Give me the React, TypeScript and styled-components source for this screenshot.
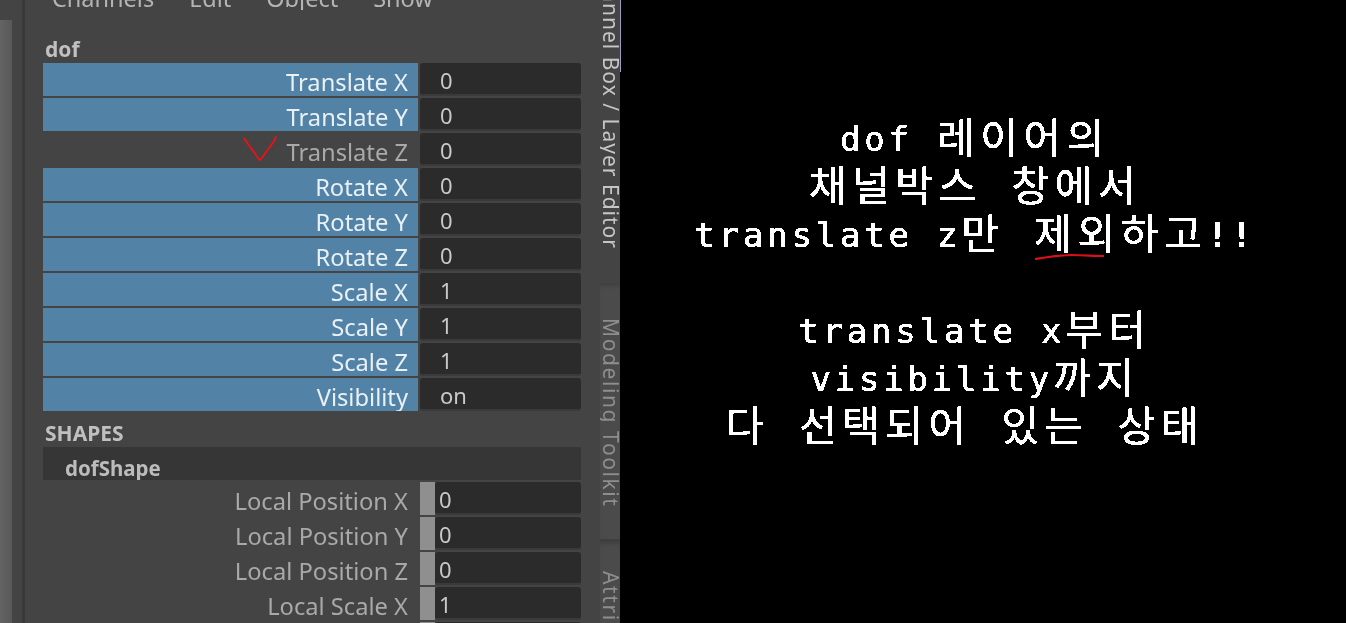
import React from "react";
import styled, { createGlobalStyle } from "styled-components";

const GlobalStyle = createGlobalStyle`
  html, body {
    margin: 0;
    padding: 0;
    height: 100%;
    background: #000;
    overflow: hidden;
  }
  #root {
    height: 100%;
  }
`;

// ---------------------
// Page
// ---------------------
const Page = styled.div`
  display: flex;
  width: 1346px;
  height: 623px;
  overflow: hidden;
`;

const MayaWindow = styled.div`
  position: relative;
  display: flex;
  flex: 0 0 620px;
  height: 623px;
  overflow: hidden;
  background: #444444;
  font-family: "Noto Sans", "Open Sans", sans-serif;
`;

/* Faixa cinza da esquerda */
const LeftGutter = styled.div`
  flex: 0 0 12px;
  margin-top: 20px;
  background: linear-gradient(90deg, #646464, #585858);
`;

const LeftDivider = styled.div`
  flex: 0 0 3px;
  margin-left: 10px;
  background: #393939;
`;

/* Channel box */
const ChannelBox = styled.div`
  flex: 0 0 556px;
  padding-left: 18px;
  box-sizing: border-box;
  filter: blur(0.5px);
`;

const MenuBar = styled.div`
  display: flex;
  align-items: flex-end;
  height: 10px;
  overflow: hidden;
  padding-left: 9px;
  gap: 35px;
`;

const MenuItem = styled.span`
  font-size: 23.5px;
  line-height: 30px;
  margin-bottom: -3px;
  color: #b4b4b4;
  flex: none;
`;

const NodeName = styled.div`
  height: 53px;
  box-sizing: border-box;
  padding: 26px 0 0 2px;
  font-size: 21px;
  line-height: 26px;
  font-weight: 700;
  color: #c0c0c0;
`;

const Row = styled.div`
  display: flex;
  height: 33px;
  margin-bottom: 2px;
`;

const Label = styled.div<{ $selected?: boolean }>`
  flex: 0 0 375px;
  box-sizing: border-box;
  padding-right: 10px;
  text-align: right;
  font-size: 23.7px;
  line-height: 39px;
  height: 33px;
  overflow: hidden;
  color: ${(p) => (p.$selected ? "#e8f1f6" : "#a9a9a9")};
  background: ${(p) => (p.$selected ? "#5283a7" : "transparent")};
`;

const Swatch = styled.div`
  flex: 0 0 15px;
  margin-left: 2px;
  background: #8f8f8f;
`;

const Value = styled.div<{ $keyed?: boolean }>`
  flex: 1;
  margin-left: ${(p) => (p.$keyed ? "0" : "2px")};
  padding-left: ${(p) => (p.$keyed ? "4px" : "20px")};
  border-radius: 3px;
  border-bottom: 2px solid #3a3a3a;
  height: 31px;
  background: #2b2b2b;
  font-size: 22px;
  line-height: 34px;
  color: #c9c9c9;
  overflow: hidden;
`;

const SectionTitle = styled.div`
  height: 34px;
  box-sizing: border-box;
  padding: 7px 0 0 2px;
  font-size: 21px;
  line-height: 26px;
  font-weight: 700;
  color: #c0c0c0;
`;

const ShapeHeader = styled.div`
  height: 33px;
  margin-bottom: 2px;
  box-sizing: border-box;
  padding-left: 22px;
  background: #363636;
  font-size: 20.5px;
  line-height: 42px;
  font-weight: 700;
  color: #bcbcbc;
  overflow: hidden;
`;

/* Abas verticais */
const SideColumn = styled.div`
  flex: 0 0 20px;
  margin-left: 19px;
  display: flex;
  flex-direction: column;
  overflow: hidden;
`;

const Tab = styled.div<{ $active?: boolean; $height: number }>`
  flex: 0 0 ${(p) => p.$height}px;
  box-sizing: border-box;
  overflow: hidden;
  background: ${(p) => (p.$active ? "#444444" : "#4b4b4b")};
  border-bottom: ${(p) => (p.$active ? "none" : "2px solid #3e3e3e")};
  box-shadow: ${(p) => (p.$active ? "none" : "inset 0 6px 5px -4px #3d3d3d")};
`;

const TabText = styled.div<{ $active?: boolean; $start: number }>`
  writing-mode: vertical-rl;
  margin-top: ${(p) => p.$start}px;
  margin-left: 2px;
  height: 400px;
  font-size: 21px;
  line-height: 18px;
  white-space: nowrap;
  letter-spacing: ${(p) => (p.$active ? "1px" : "1.6px")};
  color: ${(p) => (p.$active ? "#c6c6c6" : "#8e8e8e")};
  filter: blur(0.4px);
`;

const RedCheck = styled.svg`
  position: absolute;
  left: 243px;
  top: 135px;
  width: 35px;
  height: 27px;
`;

/* Painel de texto preto */
const NotePanel = styled.div`
  position: relative;
  flex: 1;
  background: #000;
  color: #fff;
  padding: 111px 16px 0 0;
  display: flex;
  flex-direction: column;
  align-items: center;
  font-family: "Noto Sans CJK KR", sans-serif;
  font-size: 41px;
  line-height: 48px;
  letter-spacing: 5.5px;
  word-spacing: 15px;
  white-space: pre;
`;

const TabEdgeLine = styled.div`
  position: absolute;
  left: 0;
  top: 0;
  width: 1px;
  height: 72px;
  background: #9c9cc4;
`;

const NoteLine = styled.div<{ $offset?: number }>`
  height: 48px;
  margin-left: ${(p) => p.$offset ?? 0}px;
  -webkit-text-stroke: 0.5px #fff;
  filter: url(#pixelText);
`;

const NoteGap = styled.div`
  height: 48px;
`;

const Latin = styled.span<{ $bold?: boolean }>`
  font-family: "DejaVu Sans Mono", monospace;
  font-size: 34px;
  font-weight: ${(p) => (p.$bold ? 700 : 400)};
  letter-spacing: 3.8px;
  word-spacing: 0;
  vertical-align: 2px;
`;

const RedUnderline = styled.svg`
  position: absolute;
  left: 414px;
  top: 253px;
  width: 72px;
  height: 8px;
`;

const PixelFilter = styled.svg`
  position: absolute;
  width: 0;
  height: 0;
`;

const mainRows = [
  { label: "Translate X", value: "0", selected: true },
  { label: "Translate Y", value: "0", selected: true },
  { label: "Translate Z", value: "0", selected: false },
  { label: "Rotate X", value: "0", selected: true },
  { label: "Rotate Y", value: "0", selected: true },
  { label: "Rotate Z", value: "0", selected: true },
  { label: "Scale X", value: "1", selected: true },
  { label: "Scale Y", value: "1", selected: true },
  { label: "Scale Z", value: "1", selected: true },
  { label: "Visibility", value: "on", selected: true },
];

const shapeRows = [
  { label: "Local Position X", value: "0" },
  { label: "Local Position Y", value: "0" },
  { label: "Local Position Z", value: "0" },
  { label: "Local Scale X", value: "1" },
  { label: "", value: "" },
];

export default function App() {
  return (
    <Page>
      <GlobalStyle />
      <MayaWindow>
        <LeftGutter />
        <LeftDivider />
        <ChannelBox>
          <MenuBar>
            <MenuItem>Channels</MenuItem>
            <MenuItem>Edit</MenuItem>
            <MenuItem>Object</MenuItem>
            <MenuItem>Show</MenuItem>
          </MenuBar>
          <NodeName>dof</NodeName>
          {mainRows.map((row) => (
            <Row key={row.label}>
              <Label $selected={row.selected}>{row.label}</Label>
              <Value>{row.value}</Value>
            </Row>
          ))}
          <SectionTitle>SHAPES</SectionTitle>
          <ShapeHeader>dofShape</ShapeHeader>
          {shapeRows.map((row) => (
            <Row key={row.label}>
              <Label>{row.label}</Label>
              <Swatch />
              <Value $keyed>{row.value}</Value>
            </Row>
          ))}
        </ChannelBox>
        <SideColumn>
          <Tab $active $height={283}>
            <TabText $active $start={-38}>
              Channel Box / Layer Editor
            </TabText>
          </Tab>
          <Tab $height={258}>
            <TabText $start={35}>Modeling Toolkit</TabText>
          </Tab>
          <Tab $height={90}>
            <TabText $start={30}>Attribute Editor</TabText>
          </Tab>
        </SideColumn>
        <RedCheck viewBox="0 0 35 27" fill="none">
          <path
            d="M1 3 C4 8 8 13 11 17 C13 20 15 24 17 25 C19 24 22 18 26 13 C29 9 32 6 33 1"
            stroke="#ee1018"
            strokeWidth="1.8"
          />
        </RedCheck>
      </MayaWindow>
      <NotePanel>
        <PixelFilter aria-hidden="true">
          <filter id="pixelText" x="0" y="0" width="100%" height="100%">
            <feComponentTransfer>
              <feFuncA type="discrete" tableValues="0 1" />
            </feComponentTransfer>
          </filter>
        </PixelFilter>
        <TabEdgeLine />
        <NoteLine>
          <Latin>dof </Latin>레이어의
        </NoteLine>
        <NoteLine>채널박스 창에서</NoteLine>
        <NoteLine>
          <Latin>translate z</Latin>만 제외하고<Latin $bold>!!</Latin>
        </NoteLine>
        <NoteGap />
        <NoteLine>
          <Latin>translate x</Latin>부터
        </NoteLine>
        <NoteLine>
          <Latin>visibility</Latin>까지
        </NoteLine>
        <NoteLine $offset={-20}>다 선택되어 있는 상태</NoteLine>
        <RedUnderline viewBox="0 0 72 8" fill="none">
          <path d="M1 6 C14 4 26 2 38 2 C50 2 60 3 70 3" stroke="#d8101a" strokeWidth="2.2" />
        </RedUnderline>
      </NotePanel>
    </Page>
  );
}
